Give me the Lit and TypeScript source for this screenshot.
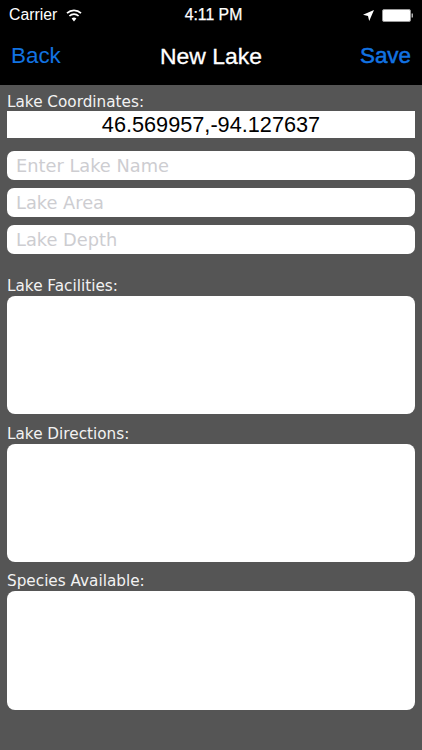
import { LitElement, html, css } from "lit";
import { customElement } from "lit/decorators.js";

@customElement("app-root")
export class AppRoot extends LitElement {
  static styles = css`
    :host {
      display: block;
      width: 422px;
      height: 750px;
      background: #555555;
      overflow: hidden;
      font-family: "Liberation Sans", Arial, sans-serif;
    }
    .top {
      background: #000;
      height: 85px;
      box-sizing: border-box;
      display: flex;
      flex-direction: column;
    }
    .status {
      height: 30px;
      display: grid;
      grid-template-columns: 1fr auto 1fr;
      align-items: center;
      padding: 0 9px 0 9px;
      color: #fff;
      font-size: 15.8px;
    }
    .status .left,
    .status .right {
      display: flex;
      align-items: center;
    }
    .status .left {
      gap: 9px;
    }
    .status .right {
      justify-content: flex-end;
      gap: 8px;
    }
    .time {
      padding-left: 5px;
      -webkit-text-stroke: 0.25px #fff;
    }
    .nav {
      flex: 1;
      display: grid;
      grid-template-columns: 1fr auto 1fr;
      align-items: center;
      padding: 0 11px 3px 11px;
      font-size: 22.4px;
    }
    .back {
      color: #1273e2;
    }
    .title {
      color: #fff;
      font-size: 22.9px;
      -webkit-text-stroke: 0.3px #fff;
    }
    .save {
      color: #1273e2;
      justify-self: end;
      -webkit-text-stroke: 0.5px #1273e2;
    }
    .form {
      padding: 8px 7px 0;
      display: flex;
      flex-direction: column;
    }
    .label {
      font-family: "DejaVu Sans", Verdana, sans-serif;
      font-size: 15.25px;
      line-height: 18px;
      color: #f2f2f2;
    }
    .lower {
      line-height: 20px;
    }
    .coords {
      background: #fff;
      height: 27px;
      text-align: center;
      font-size: 21.7px;
      line-height: 27px;
      color: #000;
    }
    .inputs {
      display: flex;
      flex-direction: column;
      gap: 8.5px;
      margin-top: 13px;
      margin-bottom: 22.3px;
    }
    .input {
      background: #fff;
      height: 28.5px;
      border-radius: 7px;
      padding-left: 9px;
      font-family: "DejaVu Sans", Verdana, sans-serif;
      font-size: 17.8px;
      line-height: 30px;
      color: #cdcdd1;
    }
    .area {
      background: #fff;
      height: 118.5px;
      border-radius: 8px;
      margin-bottom: 9.3px;
    }
    svg {
      display: block;
    }
  `;

  render() {
    return html`
      <div class="top">
        <div class="status">
          <div class="left">
            <span>Carrier</span>
            <svg width="16" height="13" viewBox="0 0 16 13">
              <path d="M8 12.4 5.6 9.6a3.5 3.5 0 0 1 4.8 0Z" fill="#fff" />
              <path d="M3.4 7a6.6 6.6 0 0 1 9.2 0" fill="none" stroke="#fff" stroke-width="1.7" />
              <path d="M1 4.2a10.2 10.2 0 0 1 14 0" fill="none" stroke="#fff" stroke-width="1.7" />
            </svg>
          </div>
          <span class="time">4:11 PM</span>
          <div class="right">
            <svg width="11" height="11" viewBox="0 0 11 11">
              <path d="M11 0 6.2 11 5 6 0 4.8Z" fill="#fff" />
            </svg>
            <svg width="31" height="13" viewBox="0 0 31 13">
              <rect x="0.5" y="0.5" width="28" height="12" rx="1.5" fill="#fff" stroke="#999" stroke-width="1" />
              <rect x="29.5" y="4.5" width="1.5" height="4" fill="#aaa" />
            </svg>
          </div>
        </div>
        <div class="nav">
          <span class="back">Back</span>
          <span class="title">New Lake</span>
          <span class="save">Save</span>
        </div>
      </div>
      <div class="form">
        <div class="label">Lake Coordinates:</div>
        <div class="coords">46.569957,-94.127637</div>
        <div class="inputs">
          <div class="input">Enter Lake Name</div>
          <div class="input">Lake Area</div>
          <div class="input">Lake Depth</div>
        </div>
        <div class="label lower">Lake Facilities:</div>
        <div class="area"></div>
        <div class="label lower">Lake Directions:</div>
        <div class="area"></div>
        <div class="label lower">Species Available:</div>
        <div class="area"></div>
      </div>
    `;
  }
}
